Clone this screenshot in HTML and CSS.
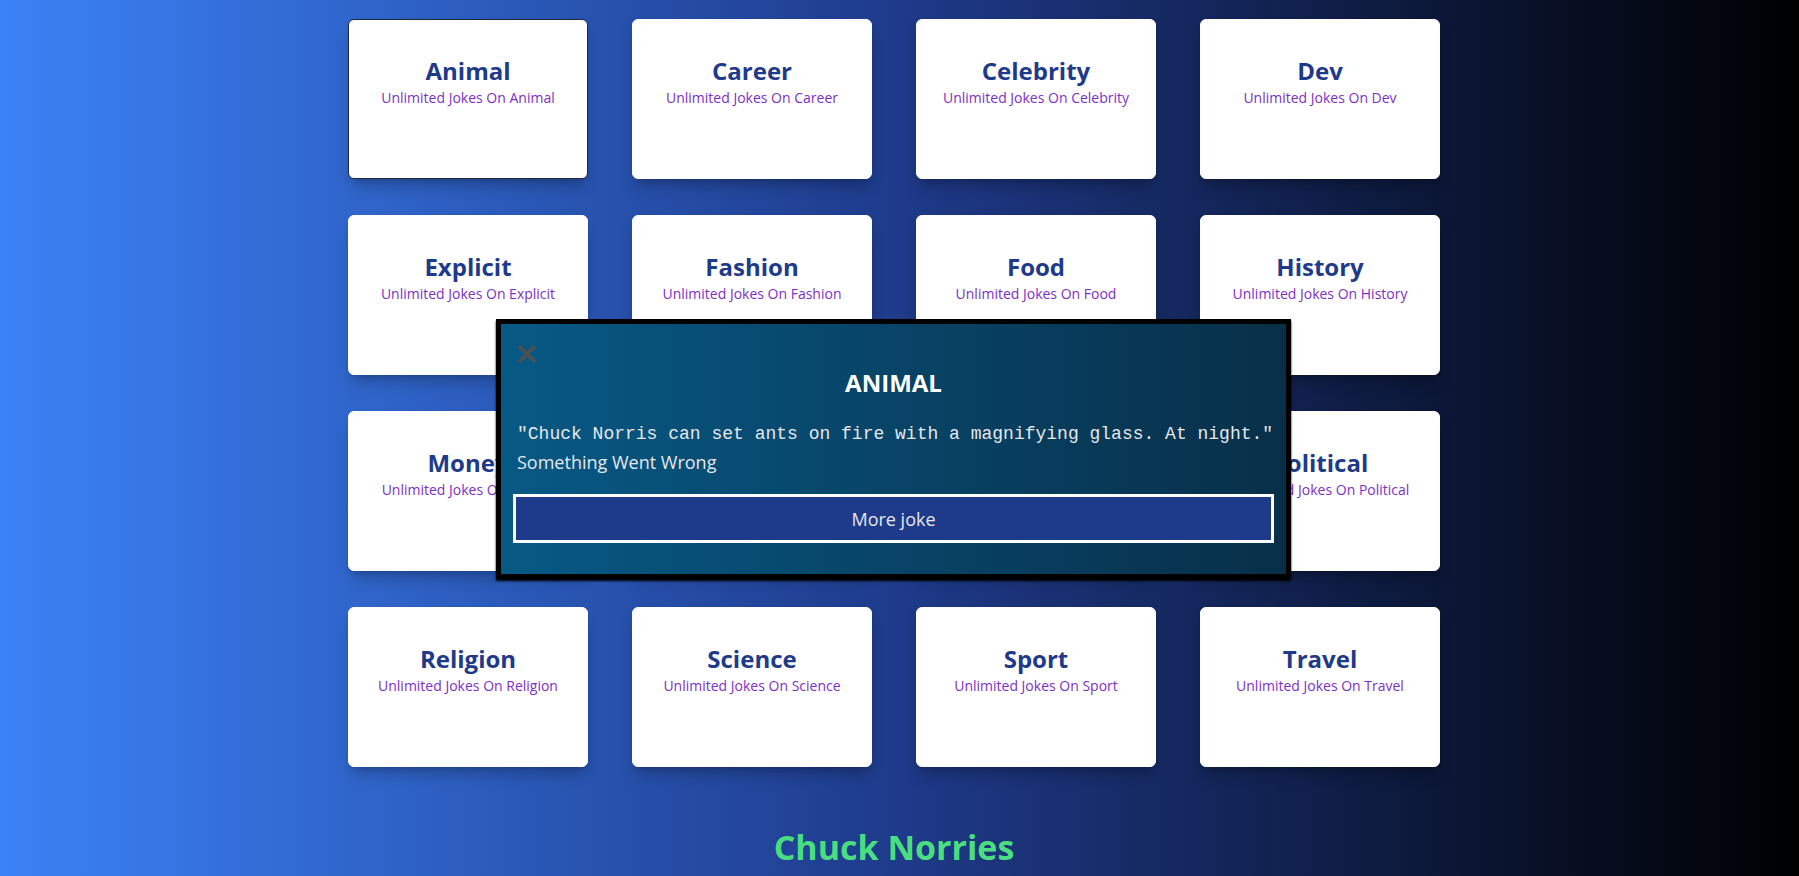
FILE: index.html
```html
<!DOCTYPE html>
<html lang="en">
<head>
<meta charset="utf-8">
<title>Chuck Norries</title>
<link rel="stylesheet" href="styles.css">
</head>
<body>
<main class="page">
  <section class="grid">
    <div class="card active"><h3 class="card-title">Animal</h3><p class="card-sub">Unlimited Jokes On Animal</p></div>
    <div class="card"><h3 class="card-title">Career</h3><p class="card-sub">Unlimited Jokes On Career</p></div>
    <div class="card"><h3 class="card-title">Celebrity</h3><p class="card-sub">Unlimited Jokes On Celebrity</p></div>
    <div class="card"><h3 class="card-title">Dev</h3><p class="card-sub">Unlimited Jokes On Dev</p></div>
    <div class="card"><h3 class="card-title">Explicit</h3><p class="card-sub">Unlimited Jokes On Explicit</p></div>
    <div class="card"><h3 class="card-title">Fashion</h3><p class="card-sub">Unlimited Jokes On Fashion</p></div>
    <div class="card"><h3 class="card-title">Food</h3><p class="card-sub">Unlimited Jokes On Food</p></div>
    <div class="card"><h3 class="card-title">History</h3><p class="card-sub">Unlimited Jokes On History</p></div>
    <div class="card"><h3 class="card-title">Money</h3><p class="card-sub">Unlimited Jokes On Money</p></div>
    <div class="card"><h3 class="card-title">Movie</h3><p class="card-sub">Unlimited Jokes On Movie</p></div>
    <div class="card"><h3 class="card-title">Music</h3><p class="card-sub">Unlimited Jokes On Music</p></div>
    <div class="card"><h3 class="card-title">Political</h3><p class="card-sub">Unlimited Jokes On Political</p></div>
    <div class="card"><h3 class="card-title">Religion</h3><p class="card-sub">Unlimited Jokes On Religion</p></div>
    <div class="card"><h3 class="card-title">Science</h3><p class="card-sub">Unlimited Jokes On Science</p></div>
    <div class="card"><h3 class="card-title">Sport</h3><p class="card-sub">Unlimited Jokes On Sport</p></div>
    <div class="card"><h3 class="card-title">Travel</h3><p class="card-sub">Unlimited Jokes On Travel</p></div>
  </section>
  <h1 class="brand">Chuck Norries</h1>
</main>

<div class="modal">
  <button class="close" aria-label="Close">
    <svg width="20" height="20" viewBox="0 0 20 20"><path d="M2 2 L18 18 M18 2 L2 18" stroke="#505050" stroke-width="3.5" fill="none"/></svg>
  </button>
  <h2 class="modal-title">ANIMAL</h2>
  <p class="joke">"Chuck Norris can set ants on fire with a magnifying glass. At night."</p>
  <p class="error">Something Went Wrong</p>
  <button class="more">More joke</button>
</div>
</body>
</html>
```
FILE: styles.css
```css
* { box-sizing: border-box; }
html, body { margin: 0; }
body {
  min-height: 100vh;
  background: linear-gradient(to right, #3b82f6 0%, #1e3a8a 50%, #000000 100%);
  font-family: "Open Sans", "Noto Sans", sans-serif;
  padding: 19px 11px 0 0;
  position: relative;
}
.page {
  display: flex;
  flex-direction: column;
  align-items: center;
}
.grid {
  display: grid;
  grid-template-columns: repeat(4, 240px);
  column-gap: 44px;
  row-gap: 36px;
}
.card {
  height: 160px;
  background: #ffffff;
  border: 1px solid #ffffff;
  border-radius: 6px;
  box-shadow: 0 10px 15px -3px rgba(0,0,0,0.22), 0 4px 6px -4px rgba(0,0,0,0.2);
  display: flex;
  flex-direction: column;
  align-items: center;
  padding-top: 35px;
}
.card.active { border-color: #1f2937; }
.card-title {
  margin: 0;
  font-size: 24px;
  line-height: 32px;
  font-weight: 700;
  color: #1e3a8a;
}
.card-sub {
  margin: 1px 0 0;
  font-size: 14px;
  line-height: 20px;
  color: #7e2fc8;
}
.brand {
  margin: 60px 0 0;
  font-size: 34px;
  line-height: 40px;
  font-weight: 700;
  color: #4ade80;
}
.modal {
  position: absolute;
  left: 496px;
  top: 319px;
  width: 795px;
  height: 260px;
  border: 5px solid #000000;
  background: linear-gradient(to right, #075985, #082f49);
  box-shadow: 0 2px 2px #000000;
  padding: 12px;
  display: flex;
  flex-direction: column;
  color: #e5e7eb;
}
.close {
  display: block;
  width: 20px;
  height: 20px;
  margin: 8px 0 0 4px;
  padding: 0;
  border: 0;
  background: none;
}
.close svg { display: block; }
.modal-title {
  margin: 3px 0 0;
  text-align: center;
  font-size: 24px;
  line-height: 32px;
  font-weight: 700;
  color: #ffffff;
}
.joke {
  margin: 22px 0 0 4px;
  font-family: "Liberation Mono", monospace;
  font-size: 18px;
  line-height: 27px;
  white-space: nowrap;
}
.error {
  margin: 1px 0 0 4px;
  font-size: 18px;
  line-height: 27px;
}
.more {
  margin-top: 18px;
  width: 100%;
  height: 49px;
  border: 3px solid #ffffff;
  background: #1e3a8a;
  color: #e5e7eb;
  font-family: "Open Sans", "Noto Sans", sans-serif;
  font-size: 18px;
}
```
